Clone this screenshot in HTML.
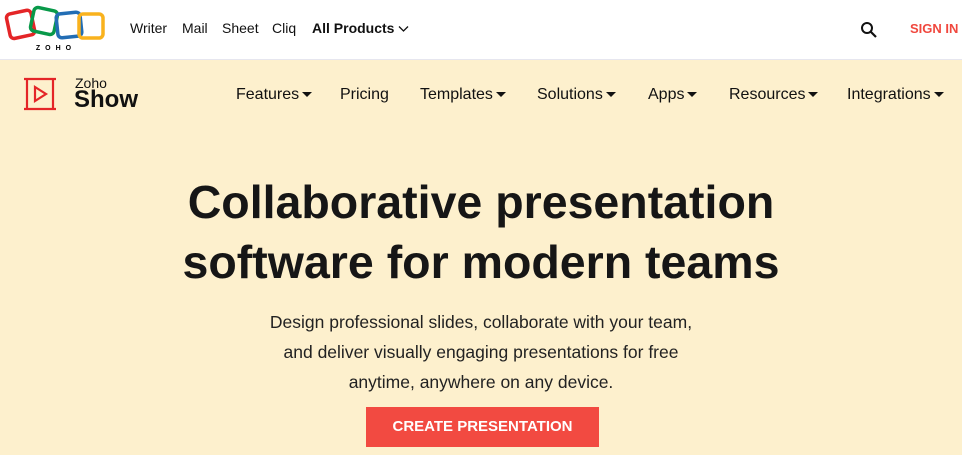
<!DOCTYPE html>
<html><head><meta charset="utf-8"><style>
*{margin:0;padding:0;box-sizing:border-box}
body{width:962px;height:455px;overflow:hidden;font-family:"Liberation Sans",sans-serif;background:#fdf0cd;color:#111;position:relative}
.top{position:absolute;left:0;top:0;width:962px;height:60px;background:#fff;border-bottom:1px solid #e6e6ef}
.t{position:absolute;top:20px;font-size:14px;color:#111}
.nav{position:absolute;top:86px;font-size:16px;color:#111;white-space:nowrap}
.ar{display:inline-block;width:0;height:0;border-left:5px solid transparent;border-right:5px solid transparent;border-top:5px solid #111;vertical-align:middle;margin-left:3px}
h1{position:absolute;left:0;width:962px;top:172px;text-align:center;font-size:46.5px;line-height:60px;font-weight:bold;color:#161616}
p{position:absolute;left:0;width:962px;top:307px;text-align:center;font-size:17.5px;line-height:30px;color:#222}
.btn{position:absolute;left:366px;top:407px;width:233px;height:40px;background:#f24a41;color:#fff;font-weight:bold;font-size:15px;text-align:center;line-height:40px}
</style></head><body>
<div class="top">
<svg width="110" height="52" style="position:absolute;left:0;top:0" viewBox="0 0 110 52">
<rect x="8" y="12" width="25" height="25" rx="4" fill="none" stroke="#e42527" stroke-width="3.5" transform="rotate(-12 20 24)"/>
<rect x="32" y="9" width="24" height="24" rx="4" fill="none" stroke="#089949" stroke-width="3.5" transform="rotate(12 44 21)"/>
<rect x="57" y="13" width="24" height="24" rx="4" fill="none" stroke="#226db4" stroke-width="3.5" transform="rotate(-6 69 25)"/>
<rect x="79" y="14" width="24" height="24" rx="4" fill="none" stroke="#f9b21d" stroke-width="3.5"/>
<text x="56" y="50" font-size="7" font-weight="bold" text-anchor="middle" letter-spacing="5" font-family="Liberation Sans">ZOHO</text>
</svg>
<span class="t" style="left:130px">Writer</span>
<span class="t" style="left:182px">Mail</span>
<span class="t" style="left:222px">Sheet</span>
<span class="t" style="left:272px">Cliq</span>
<span class="t" style="left:312px;font-weight:bold">All Products <svg width="11" height="8" viewBox="0 0 11 8"><path d="M1 1.5l4.5 4.5 4.5-4.5" fill="none" stroke="#111" stroke-width="1.3"/></svg></span>
<svg width="18" height="18" style="position:absolute;left:860px;top:21px" viewBox="0 0 18 18"><circle cx="7" cy="7" r="5" fill="none" stroke="#111" stroke-width="2"/><path d="M11 11l5 5" stroke="#111" stroke-width="2.2"/></svg>
<span class="t" style="left:910px;color:#f0483e;font-weight:bold;font-size:13px;top:21px">SIGN IN</span>
</div>
<svg width="34" height="34" style="position:absolute;left:23px;top:77px" viewBox="0 0 34 34"><path d="M1 2h32M1 32h32M4 2v30M30 2v30" stroke="#e42527" stroke-width="2.2" fill="none"/><path d="M12 10l11 7-11 7z" fill="none" stroke="#e42527" stroke-width="2.2"/></svg>
<div style="position:absolute;left:75px;top:76px;font-size:14px;line-height:14px">Zoho</div>
<div style="position:absolute;left:74px;top:88px;font-size:24px;line-height:24px;font-weight:bold">Show</div>
<span class="nav" style="left:236px">Features<i class="ar"></i></span>
<span class="nav" style="left:340px">Pricing</span>
<span class="nav" style="left:420px">Templates<i class="ar"></i></span>
<span class="nav" style="left:537px">Solutions<i class="ar"></i></span>
<span class="nav" style="left:648px">Apps<i class="ar"></i></span>
<span class="nav" style="left:729px">Resources<i class="ar"></i></span>
<span class="nav" style="left:847px">Integrations<i class="ar"></i></span>
<h1>Collaborative presentation<br>software for modern teams</h1>
<p>Design professional slides, collaborate with your team,<br>and deliver visually engaging presentations for free<br>anytime, anywhere on any device.</p>
<div class="btn">CREATE PRESENTATION</div>
</body></html>
